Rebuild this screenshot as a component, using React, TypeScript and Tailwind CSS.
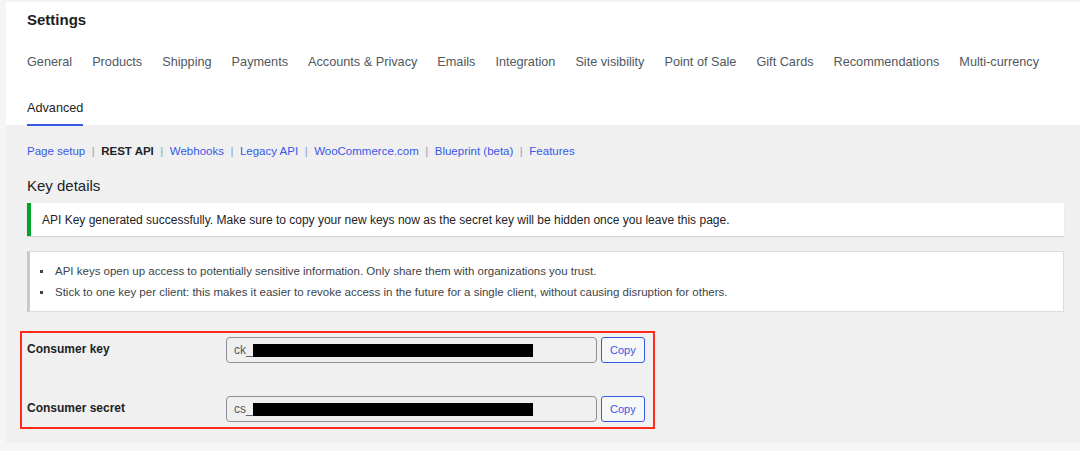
import React from 'react';

const TABS = [
    'General', 'Products', 'Shipping', 'Payments', 'Accounts & Privacy', 'Emails',
    'Integration', 'Site visibility', 'Point of Sale', 'Gift Cards', 'Recommendations', 'Multi-currency',
];

const SUBNAV = ['Page setup', 'REST API', 'Webhooks', 'Legacy API', 'WooCommerce.com', 'Blueprint (beta)', 'Features'];

const KeyRow: React.FC<{ label: string; prefix: string }> = ({ label, prefix }) => (
    <div className="flex items-center h-[26px]">
        <div className="w-[199px] text-[12px] font-semibold text-[#1d2327] -mt-[2px]">{label}</div>
        <div className="w-[371px] h-[26px] rounded-[4px] border border-[#8c8f94] bg-[#f0f0f1] flex items-center pl-[7px]">
            <span className="text-[12px] text-[#50575e]">{prefix}</span>
            <span className="w-[280px] h-[13px] bg-black" />
        </div>
        <button className="ml-[4px] h-[26px] px-[8px] rounded-[3px] border border-[#3858e9] bg-[#f6f7f7] text-[11px] text-[#3858e9]">
            Copy
        </button>
    </div>
);

export default function App() {
    return (
        <div className="w-[1080px] h-[451px] bg-[#f5f5f5] pl-[6px] pt-[2px] overflow-hidden" style={{ fontFamily: '"Liberation Sans", Arial, sans-serif' }}>
            <div className="bg-white pl-[21px] h-[123px] flex flex-col">
                <h1 className="text-[15px] font-semibold text-[#1e1e1e] pt-[9px] leading-[18px]">Settings</h1>
                <nav className="flex gap-x-[20px] text-[12.7px] text-[#50575e] mt-[25px] leading-[16px]">
                    {TABS.map(t => <span key={t}>{t}</span>)}
                </nav>
                <div className="mt-[30px] w-fit">
                    <div className="text-[12.7px] text-[#1e1e1e] leading-[16px]">Advanced</div>
                    <div className="h-[2px] bg-[#3858e9] mt-[8px]" />
                </div>
            </div>

            <div className="bg-[#f0f0f0] h-[318px] pl-[21px] pr-[10px]">
                <div className="flex items-center text-[11.5px] pt-[19px] leading-[14px]">
                    {SUBNAV.map((s, i) => (
                        <React.Fragment key={s}>
                            {i > 0 && <span className="text-[#8aa0c8] mx-[6.5px]">|</span>}
                            <span className={s === 'REST API' ? 'font-bold text-[#1d2327]' : 'text-[#3858e9]'}>{s}</span>
                        </React.Fragment>
                    ))}
                </div>

                <h2 className="text-[15px] font-medium text-[#1d2327] mt-[19px] leading-[18px]">Key details</h2>

                <div className="mt-[8px] w-[1037px] h-[33px] bg-white border-l-[4px] border-[#00a32a] shadow-[0_1px_1px_rgba(0,0,0,0.12)] flex items-center pl-[11px]">
                    <p className="text-[12px] font-medium text-[#1d2327]">
                        API Key generated successfully. Make sure to copy your new keys now as the secret key will be hidden once you leave this page.
                    </p>
                </div>

                <div className="mt-[15px] w-[1037px] h-[61px] bg-white border border-[#dcdcde] border-l-[3px] border-l-[#c8c9cb] flex flex-col justify-center gap-[6px] pl-[10px]">
                    <div className="flex items-center text-[11.5px] leading-[15px] text-[#3c434a]">
                        <span className="w-[3px] h-[3px] bg-[#3c434a] mr-[12px]" />
                        API keys open up access to potentially sensitive information. Only share them with organizations you trust.
                    </div>
                    <div className="flex items-center text-[11.5px] leading-[15px] text-[#3c434a]">
                        <span className="w-[3px] h-[3px] bg-[#3c434a] mr-[12px]" />
                        Stick to one key per client: this makes it easier to revoke access in the future for a single client, without causing disruption for others.
                    </div>
                </div>

                <div className="mt-[19px] -ml-[7px] w-[635px] h-[98px] border-2 border-[#ff2a1a] pl-[5px] pt-[4px] flex flex-col gap-[33px]">
                    <KeyRow label="Consumer key" prefix="ck_" />
                    <KeyRow label="Consumer secret" prefix="cs_" />
                </div>
            </div>
        </div>
    );
}
